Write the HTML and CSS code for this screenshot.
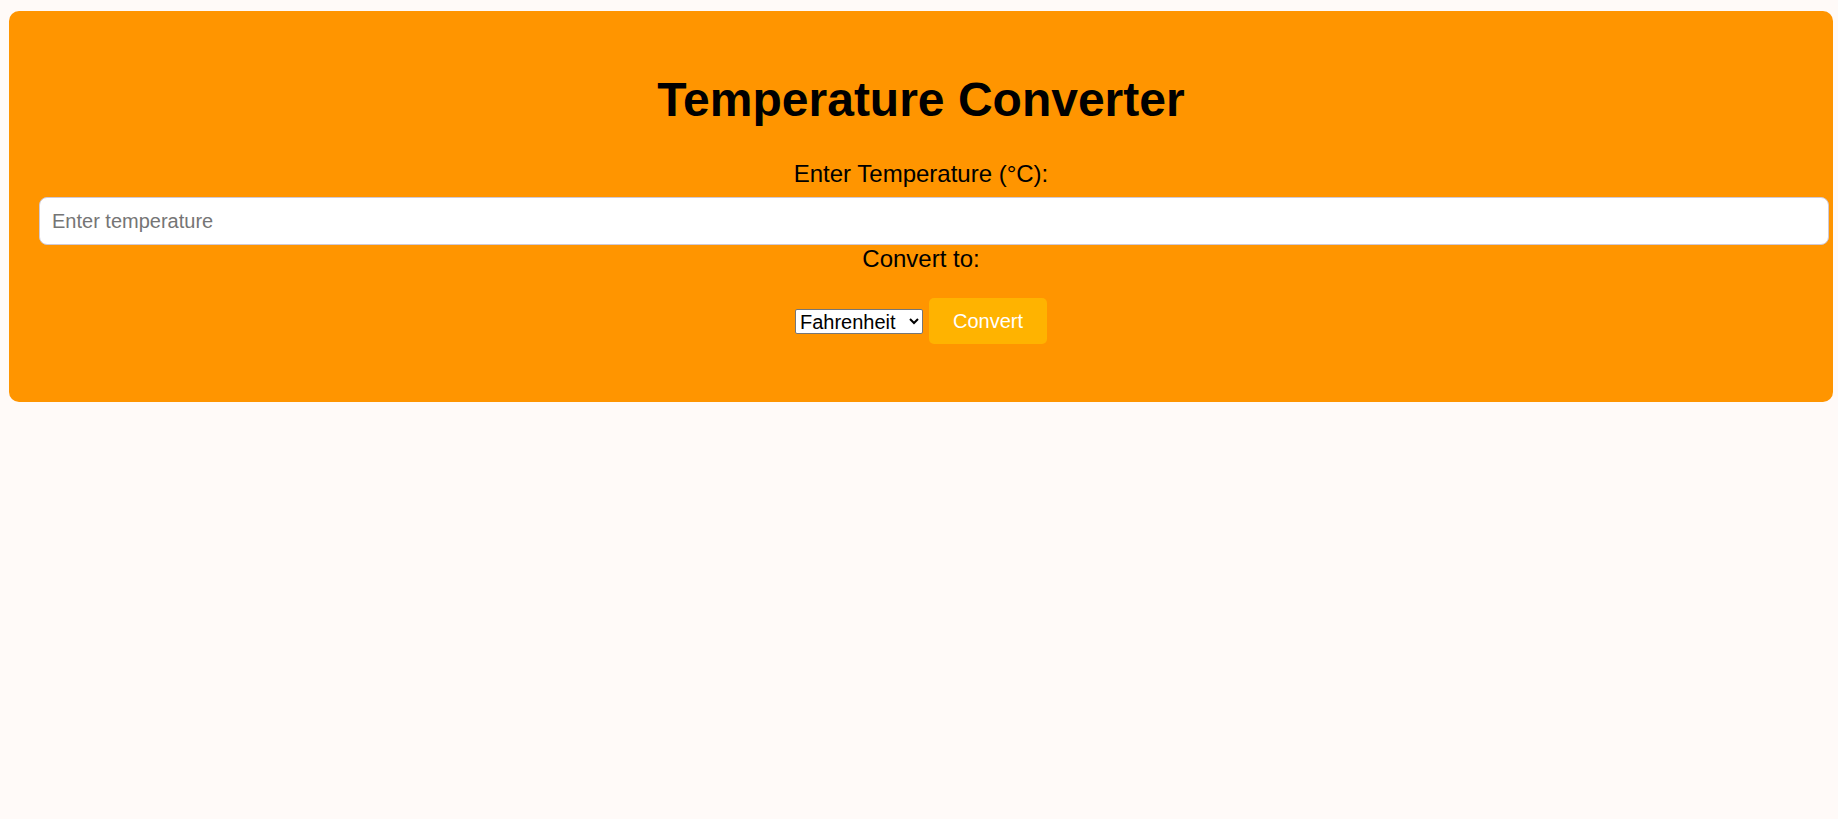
FILE: index.html
```html
<!DOCTYPE html>
<html lang="en">
<head>
<meta charset="UTF-8">
<title>Temperature Converter</title>
<link rel="stylesheet" href="styles.css">
</head>
<body>
<div class="card">
  <h1 class="title">Temperature Converter</h1>
  <label class="label" for="temp">Enter Temperature (°C):</label>
  <input class="temp-input" id="temp" type="text" placeholder="Enter temperature">
  <label class="label" for="unit">Convert to:</label>
  <div class="row">
    <select class="unit-select" id="unit">
      <option>Fahrenheit</option>
      <option>Kelvin</option>
    </select>
    <button class="convert-btn" type="button">Convert</button>
  </div>
</div>
</body>
</html>
```

FILE: styles.css
```css
html, body {
  margin: 0;
  padding: 0;
}

body {
  background: #fffaf8;
  font-family: "Liberation Sans", Arial, sans-serif;
  padding: 11px 5px 0 9px;
}

.card {
  background: #ff9500;
  border-radius: 10px;
  padding: 27px 30px 58px 30px;
  text-align: center;
  color: #000;
}

.title {
  font-size: 48px;
  font-weight: bold;
  margin: 34px 0 33px 0;
  line-height: normal;
}

.label {
  display: block;
  font-size: 24px;
  line-height: normal;
}

.temp-input {
  display: block;
  width: 100%;
  box-sizing: content-box;
  margin: 9px 0 0 0;
  padding: 12px 12px;
  height: 22px;
  font-family: "Liberation Sans", Arial, sans-serif;
  font-size: 20px;
  border: 1px solid #cfc9d6;
  border-radius: 8px;
  background: #fff;
  color: #000;
  outline: none;
}

.temp-input::placeholder {
  color: #757575;
}

.row {
  display: flex;
  justify-content: center;
  align-items: center;
  gap: 6px;
  margin-top: 25px;
}

.unit-select {
  font-family: "Liberation Sans", Arial, sans-serif;
  font-size: 20px;
  height: 25px;
  width: 128px;
  border: 1px solid #767676;
  border-radius: 2px;
  background: #fff;
  color: #000;
  padding: 0;
}

.convert-btn {
  font-family: "Liberation Sans", Arial, sans-serif;
  font-size: 20px;
  color: #fff;
  background: #ffb300;
  border: none;
  border-radius: 5px;
  height: 46px;
  width: 118px;
  padding: 0;
  cursor: pointer;
}
```
